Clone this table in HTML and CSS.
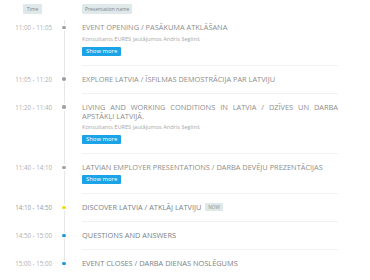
FILE: index.html
```html
<!DOCTYPE html>
<html lang="lv">
<head>
<meta charset="utf-8">
<link rel="stylesheet" href="styles.css">
</head>
<body>
<div class="schedule">
  <div class="row head">
    <div class="head-time"><span class="badge badge-time">Time</span></div>
    <div class="head-gap"></div>
    <div class="head-name"><span class="badge">Presentation name</span></div>
  </div>

  <div class="row first">
    <div class="time">11:00 - 11:05</div>
    <div class="marker"><span class="dot"></span></div>
    <div class="content">
      <div class="title">EVENT OPENING / PASĀKUMA ATKLĀŠANA</div>
      <div class="sub">Konsultants EURES jautājumos Andris Seglinš</div>
      <span class="more">Show more</span>
    </div>
  </div>

  <div class="row">
    <div class="time">11:05 - 11:20</div>
    <div class="marker"><span class="dot"></span></div>
    <div class="content">
      <div class="title">EXPLORE LATVIA / ĪSFILMAS DEMOSTRĀCIJA PAR LATVIJU</div>
    </div>
  </div>

  <div class="row">
    <div class="time">11:20 - 11:40</div>
    <div class="marker"><span class="dot"></span></div>
    <div class="content">
      <div class="title justify">LIVING AND WORKING CONDITIONS IN LATVIA / DZĪVES UN DARBA APSTĀKĻI LATVIJĀ.</div>
      <div class="sub">Konsultants EURES jautājumos Andris Seglinš</div>
      <span class="more">Show more</span>
    </div>
  </div>

  <div class="row">
    <div class="time">11:40 - 14:10</div>
    <div class="marker"><span class="dot"></span></div>
    <div class="content">
      <div class="title">LATVIAN EMPLOYER PRESENTATIONS / DARBA DEVĒJU PREZENTĀCIJAS</div>
      <span class="more nosub">Show more</span>
    </div>
  </div>

  <div class="row">
    <div class="time now-time">14:10 - 14:50</div>
    <div class="marker"><span class="dot yellow"></span></div>
    <div class="content">
      <div class="title now-title">DISCOVER LATVIA / ATKLĀJ LATVIJU <span class="now">NOW</span></div>
    </div>
  </div>

  <div class="row">
    <div class="time">14:50 - 15:00</div>
    <div class="marker"><span class="dot blue"></span></div>
    <div class="content">
      <div class="title upcoming">QUESTIONS AND ANSWERS</div>
    </div>
  </div>

  <div class="row last">
    <div class="time">15:00 - 15:00</div>
    <div class="marker"><span class="dot blue"></span></div>
    <div class="content">
      <div class="title upcoming">EVENT CLOSES / DARBA DIENAS NOSLĒGUMS</div>
    </div>
  </div>
</div>
</body>
</html>
```
FILE: styles.css
```css
html, body {
  margin: 0;
  padding: 0;
  background: #ffffff;
}
body {
  font-family: "Open Sans", "Liberation Sans", sans-serif;
  width: 370px;
  height: 280px;
  overflow: hidden;
}
.schedule {
  display: flex;
  flex-direction: column;
}
.row {
  display: grid;
  grid-template-columns: 52px 24px 262px;
}
.row.head {
  padding-top: 4px;
  height: 10px;
  align-items: start;
}
.head-time {
  display: flex;
  justify-content: flex-end;
}
.head-name {
  display: flex;
  margin-left: 6px;
}
.badge {
  display: block;
  height: 10px;
  padding: 0 3px;
  background: #dfe9ea;
  color: #7d8587;
  font-size: 5px;
  line-height: 10px;
  border-radius: 1px;
  white-space: nowrap;
}
.badge-time {
  width: 13px;
  text-align: center;
  margin-right: 10px;
}
.time {
  text-align: right;
  font-size: 6.2px;
  line-height: 9px;
  color: #b0b0b0;
  padding-top: 9px;
}
.marker {
  display: flex;
  justify-content: center;
  align-items: flex-start;
  background: linear-gradient(#e5e8ea, #e5e8ea) center top / 1px 100% no-repeat;
}
.row.first .marker {
  background-position: center 6px;
}
.row.last .marker {
  background-size: 1px 18px;
}
.dot {
  width: 3.5px;
  height: 3.5px;
  border-radius: 50%;
  background: #a0a0a0;
  margin-top: 11.8px;
  box-shadow: 0 0 0 1.5px #ffffff;
}
.dot.yellow { background: #f3d916; }
.dot.blue { background: #1a98e2; }
.content {
  margin-left: 6px;
  padding: 9px 0 9px;
  border-bottom: 1px solid #eef2f2;
  display: flex;
  flex-direction: column;
  align-items: flex-start;
}
.row.last .content {
  border-bottom: none;
}
.title {
  font-size: 7.4px;
  line-height: 9px;
  color: #8e8e8e;
  align-self: stretch;
}
.title.justify {
  text-align: justify;
}
.now-title, .upcoming {
  color: #7c8286;
}
.now-time {
  color: #9a9a9a;
}
.now {
  display: inline-block;
  background: #dfe9ea;
  color: #8c9496;
  font-size: 4.8px;
  line-height: 8px;
  height: 8px;
  padding: 0 3px;
  vertical-align: 1px;
  margin-left: 2px;
  border-radius: 1px;
}
.sub {
  font-size: 5.6px;
  line-height: 8px;
  color: #a8a8a8;
  margin-top: 2.5px;
}
.more {
  display: block;
  margin-top: 4px;
  height: 9px;
  line-height: 9px;
  padding: 0 4px;
  background: #1ba3e8;
  color: #ffffff;
  font-size: 5.9px;
  border-radius: 1px;
}
.more.nosub {
  margin-top: 3px;
}
```
